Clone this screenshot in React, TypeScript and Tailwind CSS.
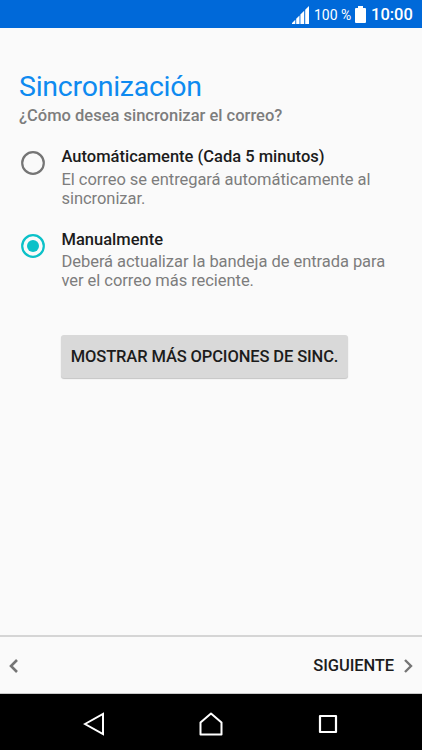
import { useState } from "react";

const options = [
    {
        id: "auto",
        title: "Automáticamente (Cada 5 minutos)",
        lines: ["El correo se entregará automáticamente al", "sincronizar."],
    },
    {
        id: "manual",
        title: "Manualmente",
        lines: ["Deberá actualizar la bandeja de entrada para", "ver el correo más reciente."],
    },
];

function Radio({ checked }: { checked: boolean }) {
    return (
        <svg width="24" height="24" viewBox="0 0 24 24" fill="none" className={checked ? "text-[#0bc1c8]" : "text-[#757575]"}>
            <circle cx="12" cy="12" r="10.8" stroke="currentColor" strokeWidth="2.2" />
            {checked && <circle cx="12" cy="12" r="6" fill="currentColor" />}
        </svg>
    );
}

export default function App() {
    const [selected, setSelected] = useState("manual");

    return (
        <div className="w-[422px] h-[750px] flex flex-col bg-[#fafafa] overflow-hidden font-['Roboto',sans-serif]">
            {/* Status bar */}
            <div className="h-7 shrink-0 bg-[#0069d9] text-white flex items-center justify-end pr-[10px]">
                <svg width="18" height="18" viewBox="0 0 18 18" fill="currentColor" className="mr-1 mt-0.5">
                    <path d="M0 18V17L3.3 13.7V18ZM4.2 18V12.8L7.5 9.5V18ZM8.4 18V8.6L12.2 4.8V18ZM13.2 18V3.8L17 0V18Z" />
                </svg>
                <span className="text-[14px] leading-7 mt-0.5 w-[37px] whitespace-nowrap">100 %</span>
                <svg width="11" height="17" viewBox="0 0 11 17" fill="currentColor" className="ml-1">
                    <path d="M3 0H8V2H10Q11 2 11 3V16Q11 17 10 17H1Q0 17 0 16V3Q0 2 1 2H3Z" />
                </svg>
                <span className="ml-[5px] w-[41px] text-[16.5px] font-medium leading-7 mt-0.5 whitespace-nowrap">10:00</span>
            </div>

            <main className="flex-1 pt-[43px] pl-[19px]">
                <h1 className="text-[28.5px] leading-8 tracking-[-0.25px] text-[#0e8af0]">Sincronización</h1>
                <p className="mt-[3px] text-[16.5px] leading-5 font-medium text-[#7d7d7d]">¿Cómo desea sincronizar el correo?</p>

                <div className="mt-[21.4px] flex flex-col gap-[22px]">
                    {options.map((option) => (
                        <button key={option.id} onClick={() => setSelected(option.id)} className="flex items-start text-left">
                            <span className="ml-[2px] mt-1 w-[40.5px]">
                                <Radio checked={selected === option.id} />
                            </span>
                            <span className="flex flex-col whitespace-nowrap">
                                <span className="mb-[3.4px] text-[16.5px] leading-[19px] font-medium text-[#1c1c1c]">{option.title}</span>
                                {option.lines.map((line) => (
                                    <span key={line} className="text-[16.5px] leading-[19px] tracking-[-0.05px] text-[#7d7d7d]">{line}</span>
                                ))}
                            </span>
                        </button>
                    ))}
                </div>

                <button className="mt-[44.8px] ml-[42px] pt-[2px] w-[287px] h-[43px] rounded-[3px] bg-[#d9d9d9] shadow-[0_1px_1px_#c4c4c4] text-[16.5px] tracking-[-0.12px] font-medium text-[#1c1c1c] whitespace-nowrap">
                    MOSTRAR MÁS OPCIONES DE SINC.
                </button>
            </main>

            {/* Wizard footer */}
            <footer className="h-[59px] shrink-0 border-t-2 border-t-[#d5d5d5] border-b border-b-[#c9c9c9] flex items-center justify-between pl-[9px] pr-[9px] pt-px">
                <svg width="10" height="14" viewBox="0 0 10 14" fill="none" stroke="#757575" strokeWidth="2.6">
                    <path d="M8 1L2 7L8 13" />
                </svg>
                <button className="flex items-center text-[16.5px] tracking-[-0.1px] font-medium text-[#1c1c1c]">
                    <span className="mr-[9px] pt-[2px]">SIGUIENTE</span>
                    <svg width="10" height="14" viewBox="0 0 10 14" fill="none" stroke="#757575" strokeWidth="2.4">
                        <path d="M2 1L8 7L2 13" />
                    </svg>
                </button>
            </footer>

            {/* Navigation bar */}
            <nav className="h-14 shrink-0 bg-black flex items-center justify-between pl-[83px] pr-[84px] pt-[3px]">
                <svg width="22" height="24" viewBox="0 0 22 24" fill="none" stroke="white" strokeWidth="2">
                    <path d="M2 12L20 2V22Z" />
                </svg>
                <svg width="24" height="24" viewBox="0 0 24 24" fill="none" stroke="white" strokeWidth="2" strokeLinejoin="round" className="mr-[1px]">
                    <path d="M1.5 22.5V10.5L12 1.5L22.5 10.5V22.5Z" />
                </svg>
                <svg width="20" height="20" viewBox="0 0 20 20" fill="none" stroke="white" strokeWidth="2.2" strokeLinejoin="round">
                    <path d="M2 2H18V18H2Z" />
                </svg>
            </nav>
        </div>
    );
}
